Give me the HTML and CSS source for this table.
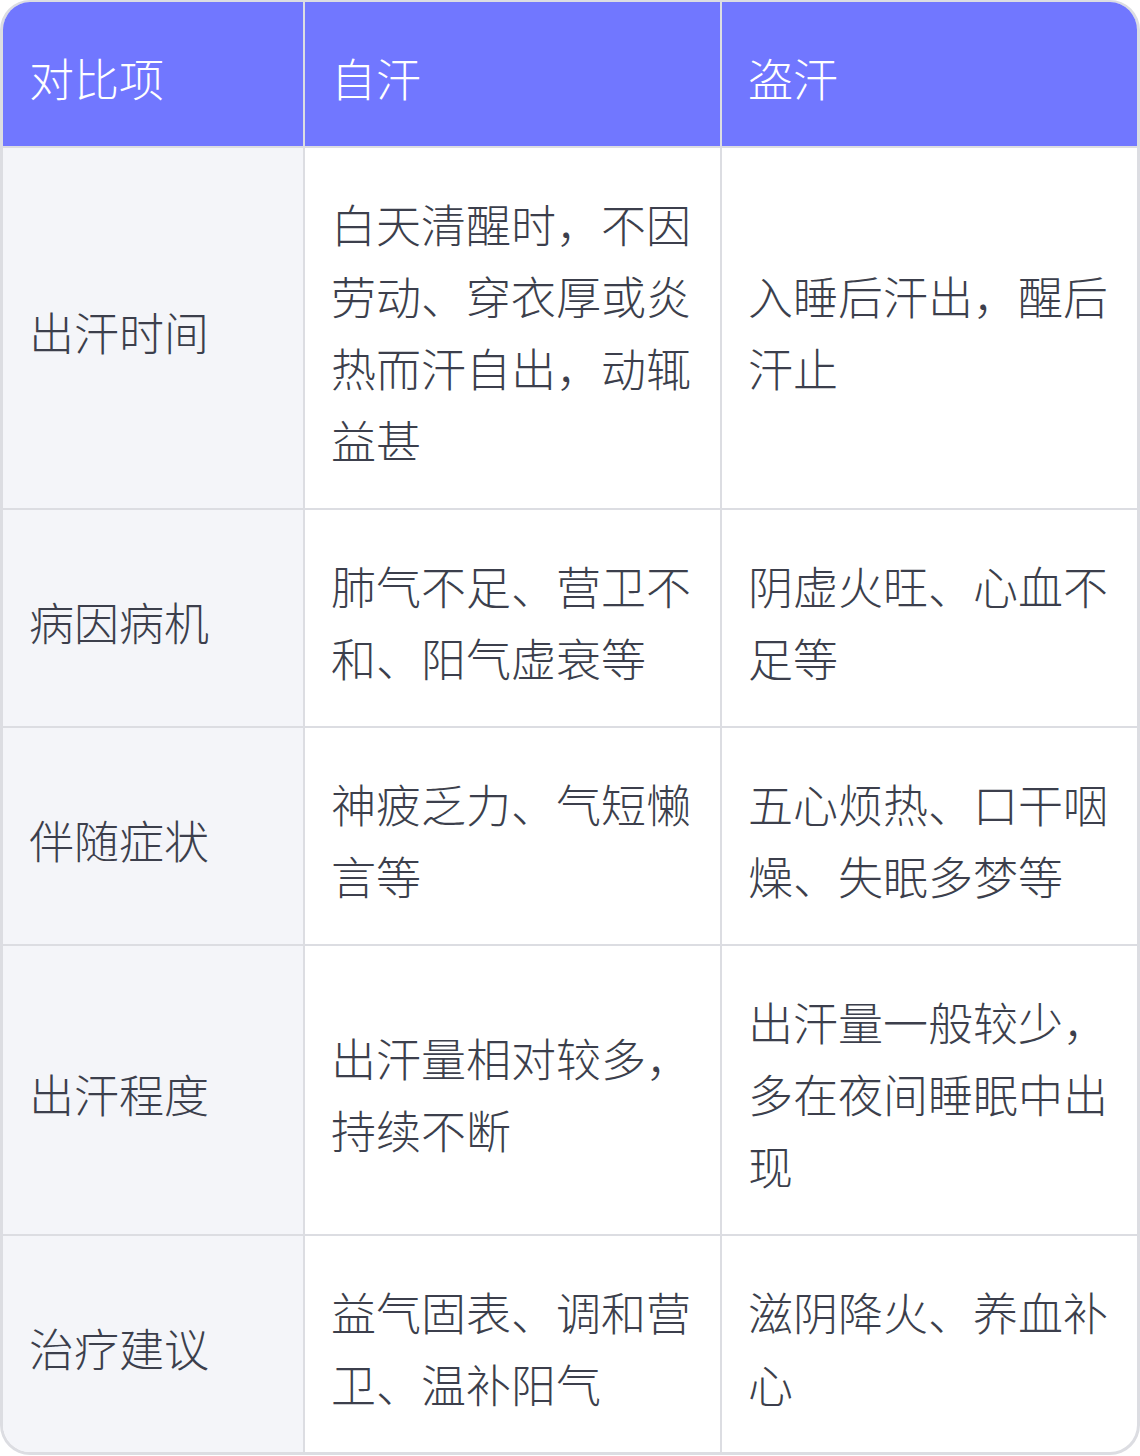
FILE: index.html
```html
<!DOCTYPE html>
<html lang="zh-CN">
<head>
<meta charset="utf-8">
<title>自汗与盗汗对比</title>
<link rel="stylesheet" href="styles.css">
</head>
<body>
<div class="card">
  <table class="cmp">
    <colgroup>
      <col class="c1">
      <col class="c2">
      <col class="c3">
    </colgroup>
    <thead>
      <tr>
        <th>对比项</th>
        <th>自汗</th>
        <th>盗汗</th>
      </tr>
    </thead>
    <tbody>
      <tr>
        <td class="key">出汗时间</td>
        <td>白天清醒时，不因劳动、穿衣厚或炎热而汗自出，动辄益甚</td>
        <td>入睡后汗出，醒后汗止</td>
      </tr>
      <tr>
        <td class="key">病因病机</td>
        <td>肺气不足、营卫不和、阳气虚衰等</td>
        <td>阴虚火旺、心血不足等</td>
      </tr>
      <tr>
        <td class="key">伴随症状</td>
        <td>神疲乏力、气短懒言等</td>
        <td>五心烦热、口干咽燥、失眠多梦等</td>
      </tr>
      <tr>
        <td class="key">出汗程度</td>
        <td>出汗量相对较多，持续不断</td>
        <td>出汗量一般较少，多在夜间睡眠中出现</td>
      </tr>
      <tr>
        <td class="key">治疗建议</td>
        <td>益气固表、调和营卫、温补阳气</td>
        <td>滋阴降火、养血补心</td>
      </tr>
    </tbody>
  </table>
</div>
</body>
</html>
```

FILE: styles.css
```css
html, body {
  margin: 0;
  padding: 0;
  background: #ffffff;
}

body {
  font-family: "Noto Sans CJK SC", "Noto Sans", sans-serif;
  width: 1140px;
}

.card {
  width: 1140px;
  box-sizing: border-box;
  border: 3px solid #dcdde2;
  border-top-width: 2px;
  border-radius: 30px;
  overflow: hidden;
  background: #ffffff;
}

.cmp {
  width: 100%;
  border-collapse: separate;
  border-spacing: 0;
  table-layout: fixed;
  font-size: 45px;
  line-height: 72px;
  color: #3c3f4c;
}

.c1 { width: 302px; }
.c2 { width: 417px; }
.c3 { width: 415px; }

.cmp th,
.cmp td {
  padding: 40px 24px 32px 26px;
  text-align: left;
  vertical-align: middle;
  border-right: 2px solid #dcdde2;
  border-bottom: 2px solid #dcdde2;
  font-weight: 300;
}

.cmp th:last-child,
.cmp td:last-child {
  border-right: none;
}

.cmp tbody tr:last-child td {
  border-bottom: none;
}

.cmp th {
  background: #7177ff;
  color: #ffffff;
}

.cmp td.key {
  background: #f4f5f9;
}
```
